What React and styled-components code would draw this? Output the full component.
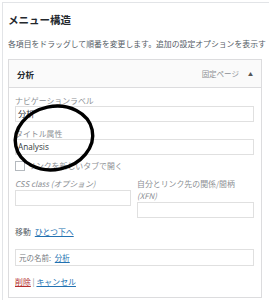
import styled, { createGlobalStyle } from 'styled-components'

const GlobalStyle = createGlobalStyle`
    html, body {
        margin: 0;
        padding: 0;
        background: #ffffff;
    }
    body {
        width: 269px;
        height: 300px;
        overflow: hidden;
        font-family: "Noto Sans CJK JP", "Noto Sans", sans-serif;
        color: #555d66;
    }
`

const Panel = styled.div`
    position: relative;
    margin: 2px 0 0 2px;
    height: 298px;
    border-top: 1px solid #e2e4e7;
    border-left: 1px solid #e2e4e7;
    padding: 10px 0 0 5px;
    box-sizing: border-box;
    overflow: hidden;
`

const Heading = styled.h2`
    margin: 0;
    font-size: 10.5px;
    line-height: 14px;
    font-weight: 600;
    color: #23282d;
`

const Description = styled.p`
    margin: 11px 0 0;
    font-size: 7.85px;
    line-height: 11px;
    color: #555d66;
    white-space: nowrap;
`

const ItemBox = styled.div`
    margin-top: 10px;
    width: 254px;
    border: 1px solid #dcdcde;
    box-sizing: border-box;
    background: #ffffff;
`

const ItemHeader = styled.div`
    display: flex;
    align-items: center;
    height: 27px;
    padding: 0 8px;
    background: #fafafa;
    border-bottom: 1px solid #dcdcde;
`

const ItemTitle = styled.span`
    flex: 1;
    font-size: 8.5px;
    font-weight: 600;
    color: #23282d;
`

const ItemType = styled.span`
    font-size: 7.5px;
    color: #8c8f94;
    margin-right: 9px;
`

const Arrow = styled.span`
    font-size: 5px;
    color: #555;
`

const ItemBody = styled.div`
    padding: 7px 7px 10px 6px;
    display: flex;
    flex-direction: column;
`

const Label = styled.label`
    display: block;
    font-size: 7.9px;
    line-height: ${props => props.$lh || 11}px;
    color: #8c8f94;
    margin-top: ${props => props.$top || 0}px;
    font-style: ${props => (props.$italic ? 'italic' : 'normal')};
`

const Italic = styled.span`
    font-style: italic;
`

const Input = styled.div`
    height: 16px;
    border: 1px solid #e0e0e0;
    box-sizing: border-box;
    background: #ffffff;
    font-family: "Open Sans", "Noto Sans CJK JP", sans-serif;
    font-size: 8.2px;
    line-height: 14px;
    padding-left: 2px;
    color: #32373c;
`

const CheckRow = styled.div`
    display: flex;
    align-items: center;
    margin-top: 5px;
    font-size: 7.9px;
    line-height: 11px;
    color: #8c8f94;
`

const Checkbox = styled.span`
    width: 8px;
    height: 8px;
    border: 1px solid #b4b9be;
    background: #fff;
    margin-right: 3px;
`

const Columns = styled.div`
    display: grid;
    grid-template-columns: 116px 117px;
    column-gap: 6px;
    margin-top: 7px;
`

const MoveRow = styled.div`
    margin-top: 8px;
    font-size: 7.9px;
    line-height: 11px;
    color: #555d66;
`

const Link = styled.a`
    color: ${props => (props.$danger ? '#b32d2e' : '#2271b1')};
    text-decoration: underline;
    margin-left: ${props => props.$gap || 0}px;
`

const Original = styled.div`
    margin-top: 12px;
    height: 17px;
    border: 1px solid #e0e0e0;
    box-sizing: border-box;
    padding-left: 3px;
    font-size: 7.5px;
    line-height: 15px;
    color: #787c82;
`

const Actions = styled.div`
    margin-top: 10px;
    font-size: 7.9px;
    line-height: 11px;
    color: #8c8f94;
`

const Circle = styled.svg`
    position: absolute;
    left: 6px;
    top: 98px;
    pointer-events: none;
`

function App() {
    return (
        <>
            <GlobalStyle />
            <Panel>
                <Heading>メニュー構造</Heading>
                <Description>各項目をドラッグして順番を変更します。追加の設定オプションを表示す</Description>
                <ItemBox>
                    <ItemHeader>
                        <ItemTitle>分析</ItemTitle>
                        <ItemType>固定ページ</ItemType>
                        <Arrow>▲</Arrow>
                    </ItemHeader>
                    <ItemBody>
                        <Label>ナビゲーションラベル</Label>
                        <Input>分析</Input>
                        <Label $top={6}>タイトル属性</Label>
                        <Input>Analysis</Input>
                        <CheckRow>
                            <Checkbox />
                            リンクを新しいタブで開く
                        </CheckRow>
                        <Columns>
                            <div>
                                <Label $lh={12} $italic>CSS class (オプション)</Label>
                                <Input />
                            </div>
                            <div>
                                <Label $lh={12}>
                                    自分とリンク先の関係/間柄
                                    <br />
                                    <Italic>(XFN)</Italic>
                                </Label>
                                <Input />
                            </div>
                        </Columns>
                        <MoveRow>
                            移動<Link $gap={4}>ひとつ下へ</Link>
                        </MoveRow>
                        <Original>
                            元の名前: <Link $gap={2}>分析</Link>
                        </Original>
                        <Actions>
                            <Link $danger>削除</Link> | <Link>キャンセル</Link>
                        </Actions>
                    </ItemBody>
                </ItemBox>
                <Circle width="92" height="78" viewBox="0 0 92 78">
                    <ellipse cx="45" cy="37" rx="39" ry="31.5" transform="rotate(-12 45 37)" fill="none" stroke="#000" strokeWidth="3.4" />
                </Circle>
            </Panel>
        </>
    )
}

export default App
